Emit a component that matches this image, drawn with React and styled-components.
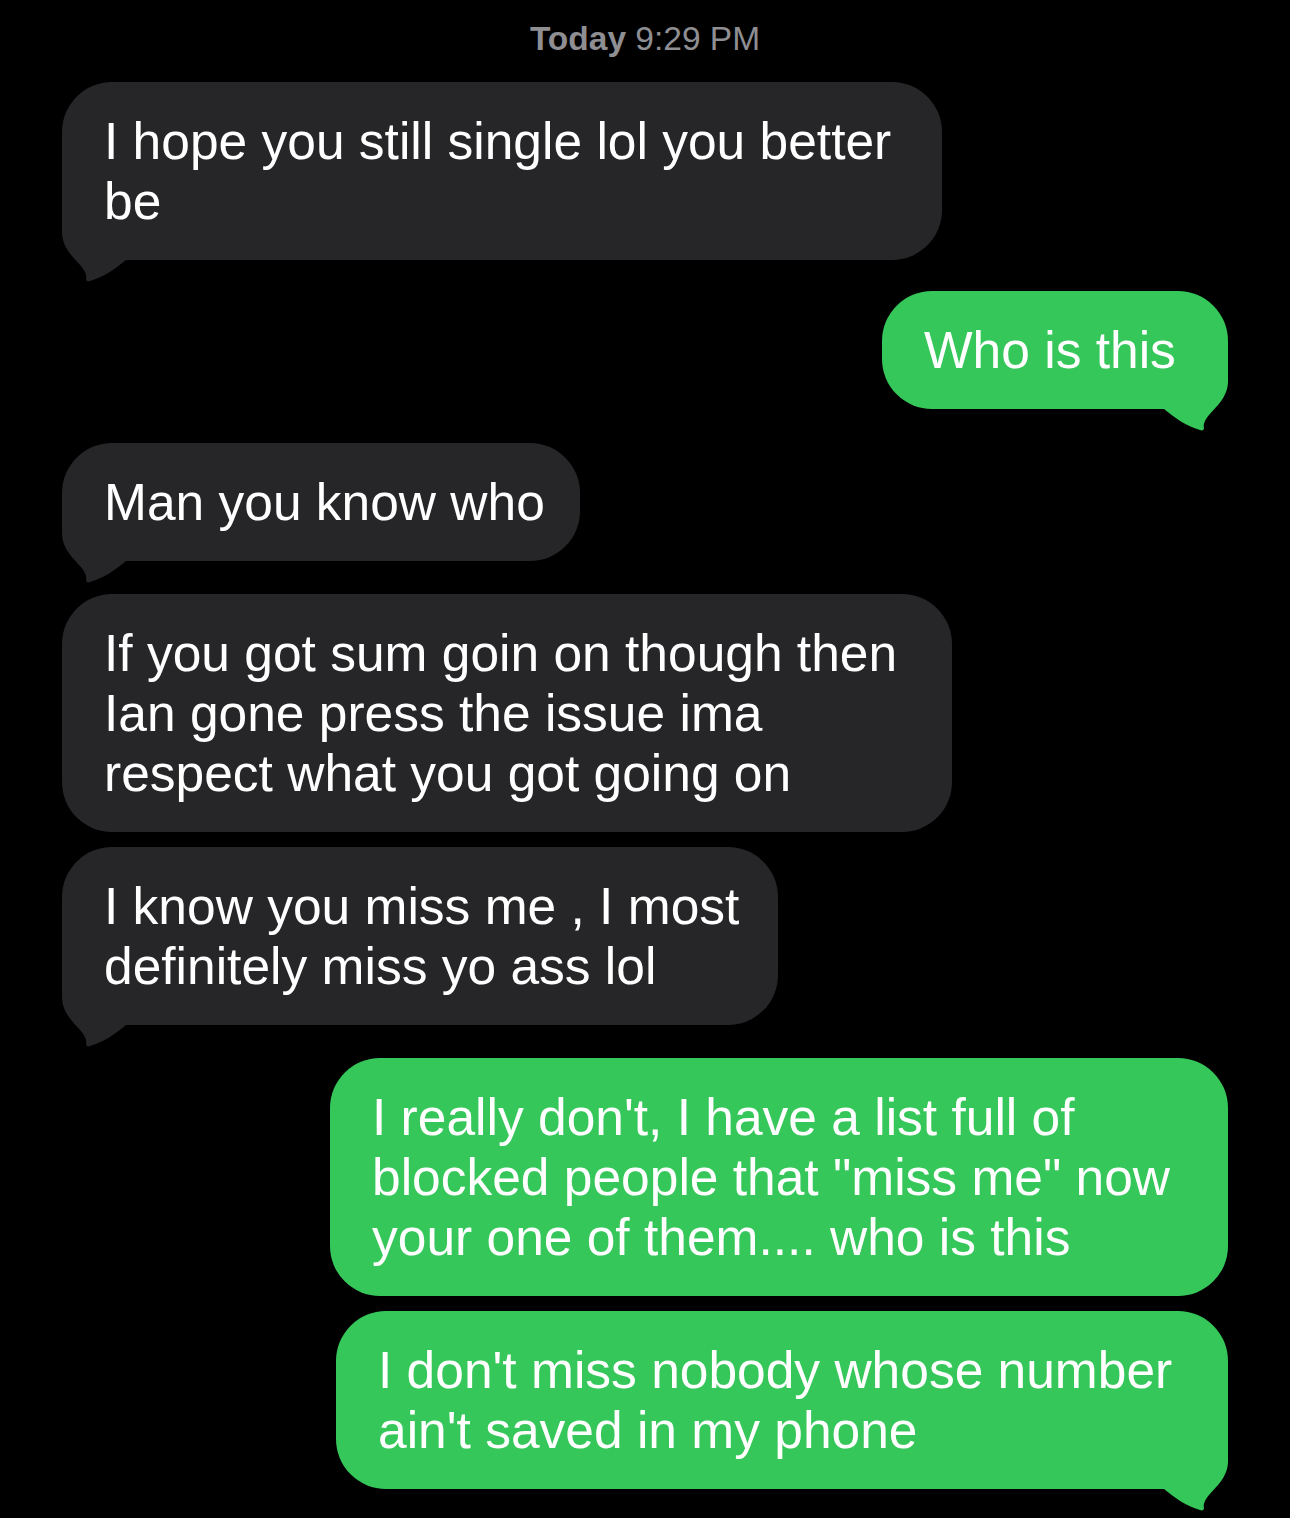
import React from "react";
import styled, { createGlobalStyle } from "styled-components";

const Global = createGlobalStyle`
  html, body { margin: 0; padding: 0; background: #000; }
  body { font-family: "Liberation Sans", Arial, sans-serif; -webkit-font-smoothing: antialiased; }
`;

const GRAY = "#262628";
const GREEN = "#35c759";

const Screen = styled.div`
  width: 1290px;
  min-height: 1518px;
  background: #000;
  box-sizing: border-box;
  padding: 18px 62px 0;
  display: flex;
  flex-direction: column;
`;

const Stamp = styled.div`
  text-align: center;
  color: #8e8e93;
  font-size: 33.5px;
  line-height: 41px;
  margin-bottom: 23px;
  b { font-weight: 700; }
`;

const Row = styled.div`
  display: flex;
  justify-content: ${(p) => (p.$sent ? "flex-end" : "flex-start")};
  margin-top: ${(p) => p.$gap || 0}px;
`;

const Bubble = styled.div`
  position: relative;
  box-sizing: border-box;
  width: ${(p) => p.$w}px;
  padding: 29px 42px;
  border-radius: 50px;
  background: ${(p) => (p.$sent ? GREEN : GRAY)};
  color: #fff;
  font-size: 51.5px;
  line-height: 60px;
`;

const Line = styled.span`
  display: block;
  white-space: nowrap;
  position: relative;
  z-index: 1;
`;

const TailSvg = styled.svg`
  position: absolute;
  bottom: -25px;
  ${(p) => (p.$sent ? "right: 0; transform: scaleX(-1);" : "left: 0;")}
  color: ${(p) => (p.$sent ? GREEN : GRAY)};
`;

function Tail({ sent }) {
  return (
    <TailSvg $sent={sent} width="80" height="85" viewBox="0 -60 80 85">
      <path
        fill="currentColor"
        d="M0 -60 L0 -28 C0 -12 12 -2 19 6 C23 11 25 15 24 19 C24 21 26 22 28 21 C42 17 53 9 64 0 L80 0 L80 -60 Z"
      />
    </TailSvg>
  );
}

function Message({ sent, w, gap, tail, lines }) {
  return (
    <Row $sent={sent} $gap={gap}>
      <Bubble $sent={sent} $w={w}>
        {tail && <Tail sent={sent} />}
        {lines.map((l, i) => (
          <Line key={i}>{l}</Line>
        ))}
      </Bubble>
    </Row>
  );
}

const messages = [
  { w: 880, gap: 0, tail: true, lines: ["I hope you still single lol you better", "be"] },
  { sent: true, w: 346, gap: 31, tail: true, lines: ["Who is this"] },
  { w: 518, gap: 34, tail: true, lines: ["Man you know who"] },
  {
    w: 890,
    gap: 33,
    lines: ["If you got sum goin on though then", "Ian gone press the issue ima", "respect what you got going on"],
  },
  { w: 716, gap: 15, tail: true, lines: ["I know you miss me , I most", "definitely miss yo ass lol"] },
  {
    sent: true,
    w: 898,
    gap: 33,
    lines: ["I really don't, I have a list full of", 'blocked people that "miss me" now', "your one of them.... who is this"],
  },
  {
    sent: true,
    w: 892,
    gap: 15,
    tail: true,
    lines: ["I don't miss nobody whose number", "ain't saved in my phone"],
  },
];

export default function App() {
  return (
    <>
      <Global />
      <Screen>
        <Stamp>
          <b>Today</b> 9:29 PM
        </Stamp>
        {messages.map((m, i) => (
          <Message key={i} {...m} />
        ))}
      </Screen>
    </>
  );
}
